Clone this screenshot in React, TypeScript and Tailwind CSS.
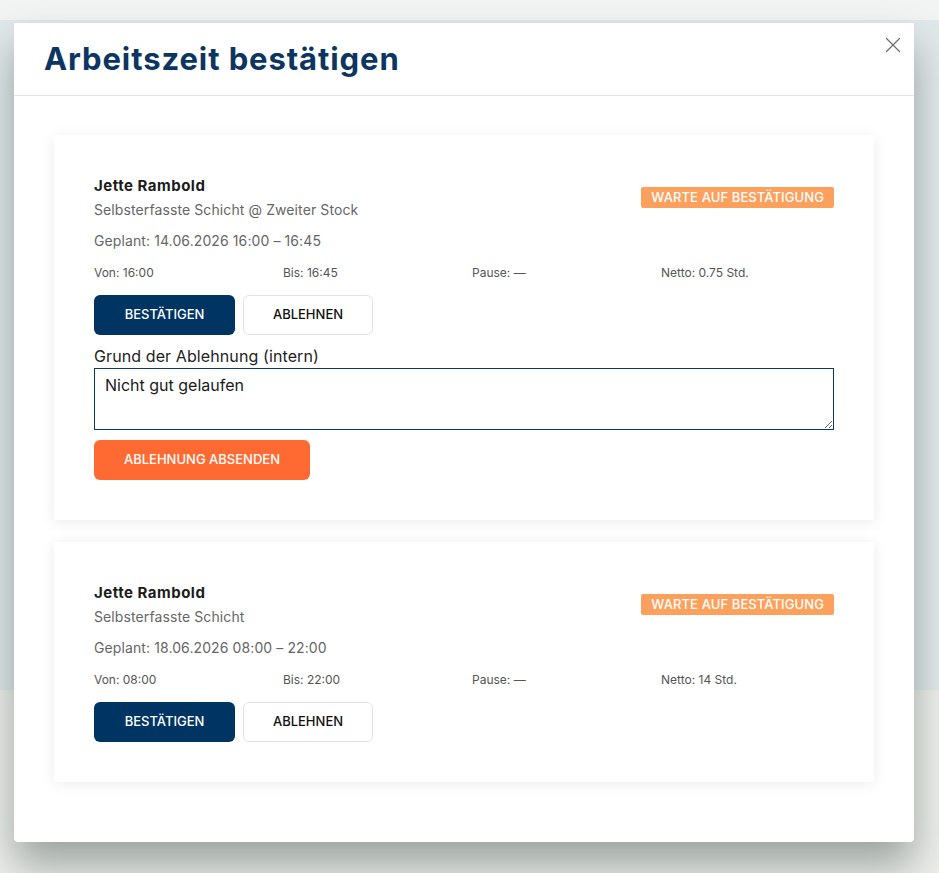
import { X } from 'lucide-react'

type Eintrag = {
  id: number
  name: string
  schicht: string
  geplant: string
  von: string
  bis: string
  pause: string
  netto: string
  ablehnung?: string
}

const EINTRAEGE: Eintrag[] = [
  {
    id: 1,
    name: 'Jette Rambold',
    schicht: 'Selbsterfasste Schicht @ Zweiter Stock',
    geplant: 'Geplant: 14.06.2026 16:00 – 16:45',
    von: '16:00',
    bis: '16:45',
    pause: '—',
    netto: '0.75 Std.',
    ablehnung: 'Nicht gut gelaufen',
  },
  {
    id: 2,
    name: 'Jette Rambold',
    schicht: 'Selbsterfasste Schicht',
    geplant: 'Geplant: 18.06.2026 08:00 – 22:00',
    von: '08:00',
    bis: '22:00',
    pause: '—',
    netto: '14 Std.',
  },
]

function Karte({ e }: { e: Eintrag }) {
  return (
    <div className="bg-white px-10 pt-[40px] pb-[40px] shadow-[0_2px_14px_rgba(0,0,0,0.08)]">
      {/* Kopf */}
      <div className="flex items-center justify-between">
        <div>
          <p className="text-[15px] font-bold text-[#1c1c1c] leading-[22px] tracking-[0.5px]">{e.name}</p>
          <p className="text-[14px] text-[#666] leading-[20px] mt-[3px] tracking-[0.1px]">{e.schicht}</p>
        </div>
        <span className="bg-[#fba05d] text-white text-[13px] font-medium uppercase px-[10px] h-[21px] leading-[21px] rounded-[2px] tracking-[0.1px]">
          Warte auf Bestätigung
        </span>
      </div>

      <p className="text-[14px] text-[#666] mt-[11px] leading-[20px] tracking-[0.1px]">{e.geplant}</p>

      <div className="grid grid-cols-4 gap-4 mt-[13px] text-[12px] text-[#555] leading-[18px]">
        <span>Von: {e.von}</span>
        <span>Bis: {e.bis}</span>
        <span>Pause: {e.pause}</span>
        <span>Netto: {e.netto}</span>
      </div>

      <div className="flex gap-2 mt-[13px]">
        <button className="w-[141px] h-10 rounded-[6px] bg-[#003462] text-white text-[13px] font-medium uppercase">
          Bestätigen
        </button>
        <button className="w-[130px] h-10 rounded-[6px] bg-white border border-[#e2e2e2] text-[#111] text-[13px] font-medium uppercase">
          Ablehnen
        </button>
      </div>

      {e.ablehnung !== undefined && (
        <div className="mt-[9px]">
          <label className="block text-[16px] text-[#222] leading-[24px] tracking-[0.1px]">Grund der Ablehnung (intern)</label>
          <textarea
            defaultValue={e.ablehnung}
            className="block w-full h-[62px] border border-[#0c3a62] px-[10px] py-[4px] text-[16px] text-[#1a1a1a] leading-[24px] outline-none resize-y"
          />
          <button className="mt-[10px] w-[216px] h-10 rounded-[6px] bg-[#ff6a33] text-white text-[13px] font-medium uppercase">
            Ablehnung absenden
          </button>
        </div>
      )}
    </div>
  )
}

export default function App() {
  return (
    <div className="relative h-[873px] w-full overflow-hidden font-['Inter','Noto_Sans',sans-serif]">
      {/* verschwommene Seite im Hintergrund */}
      <div className="flex flex-col h-full">
        <div className="h-[20px] bg-[#f1f4f3]" />
        <div className="h-[670px] bg-[#e1e8e9]" />
        <div className="flex-1 bg-[#edefeb]" />
      </div>

      {/* Modal */}
      <div className="absolute left-[14px] top-[23px] w-[900px] bg-white rounded-b-[4px] shadow-[0_24px_40px_rgba(60,75,70,0.45)]">
        <div className="relative h-[73px] border-b border-[#e3e3e3] px-[30px] flex items-center">
          <h1 className="text-[31px] font-bold text-[#0c3561] tracking-[0.9px]">Arbeitszeit bestätigen</h1>
          <button className="absolute right-[8px] top-[9px] text-[#6f6f6f]">
            <X size={26} strokeWidth={1.2} />
          </button>
        </div>

        <div className="px-10 pt-[39px] pb-[60px] flex flex-col gap-[22px]">
          {EINTRAEGE.map(e => (
            <Karte key={e.id} e={e} />
          ))}
        </div>
      </div>
    </div>
  )
}
